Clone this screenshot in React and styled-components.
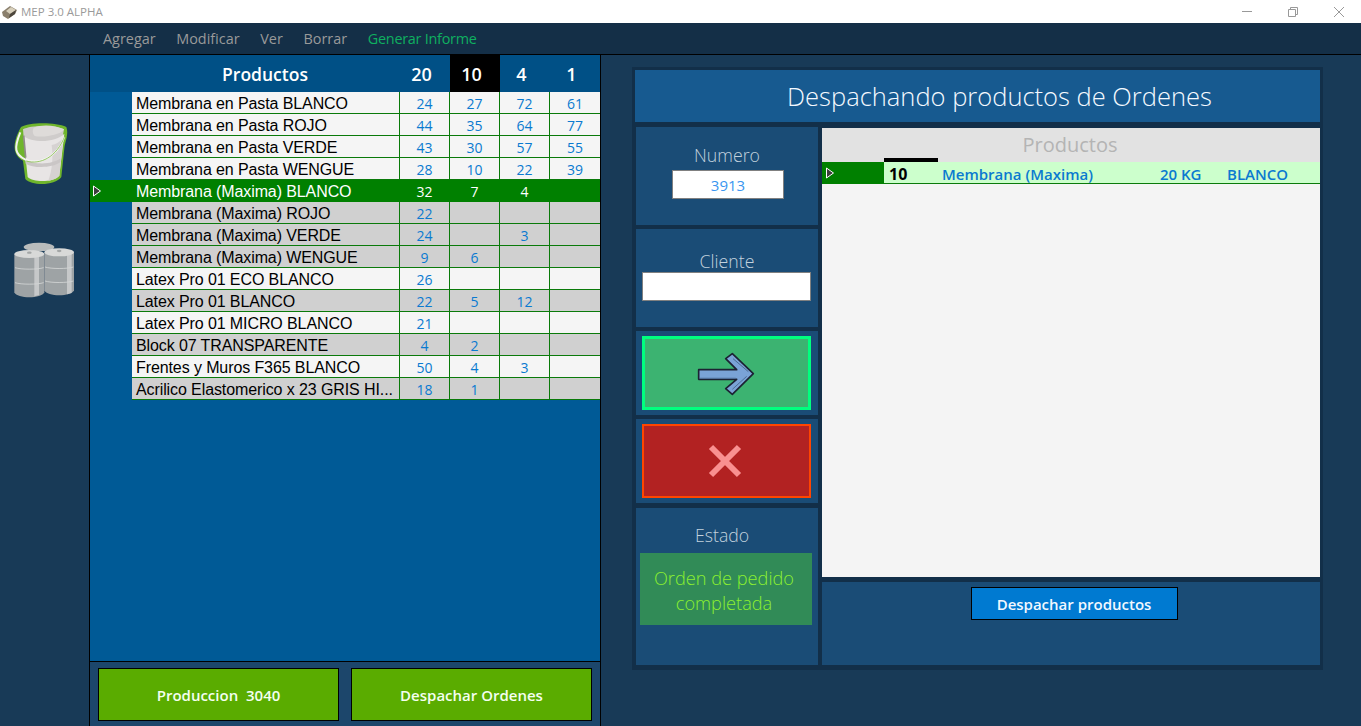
import React from "react";
import styled, { createGlobalStyle } from "styled-components";

const GlobalStyle = createGlobalStyle`
  html, body {
    margin: 0;
    height: 100%;
    overflow: hidden;
    background: #183a57;
    font-family: "Open Sans", "Noto Sans", sans-serif;
  }
  * {
    box-sizing: border-box;
  }
`;

const rows = [
  { name: "Membrana en Pasta BLANCO", v: ["24", "27", "72", "61"] },
  { name: "Membrana en Pasta ROJO", v: ["44", "35", "64", "77"] },
  { name: "Membrana en Pasta VERDE", v: ["43", "30", "57", "55"] },
  { name: "Membrana en Pasta WENGUE", v: ["28", "10", "22", "39"] },
  { name: "Membrana (Maxima) BLANCO", v: ["32", "7", "4", ""], selected: true },
  { name: "Membrana (Maxima) ROJO", v: ["22", "", "", ""], gray: true },
  { name: "Membrana (Maxima) VERDE", v: ["24", "", "3", ""], gray: true },
  { name: "Membrana (Maxima) WENGUE", v: ["9", "6", "", ""], gray: true },
  { name: "Latex Pro 01 ECO BLANCO", v: ["26", "", "", ""] },
  { name: "Latex Pro 01 BLANCO", v: ["22", "5", "12", ""], gray: true },
  { name: "Latex Pro 01 MICRO BLANCO", v: ["21", "", "", ""] },
  { name: "Block 07 TRANSPARENTE", v: ["4", "2", "", ""], gray: true },
  { name: "Frentes y Muros F365 BLANCO", v: ["50", "4", "3", ""] },
  { name: "Acrilico Elastomerico x 23 GRIS HI...", v: ["18", "1", "", ""], gray: true },
];

function RowMark() {
  return (
    <svg width="10" height="12" viewBox="0 0 10 12">
      <path d="M1.5 1 L8.5 6 L1.5 11 Z" fill="#3c3c3c" stroke="#fff" strokeWidth="1" />
    </svg>
  );
}

function AppIcon() {
  return (
    <svg width="17" height="16" viewBox="0 0 17 16">
      <path d="M1 8 L9 2 L16 6 L14 10 L7 15 L2 12 Z" fill="#8a7f6c" />
      <path d="M5 7 L10 3 L15 6 L9 10 Z" fill="#d8d0bc" />
      <path d="M9 10 L15 6 L14 10 L8 14 Z" fill="#4c463c" />
    </svg>
  );
}

function BucketIcon() {
  return (
    <svg width="75" height="75" viewBox="0 0 225 225">
      <path
        d="M48 36 C70 22 150 20 184 36 C192 58 180 80 178 100 L169 186 C150 213 80 213 61 192 L54 137 C26 122 18 90 48 36 Z"
        fill="#6fb52c"
      />
      <path d="M54 43 C76 30 150 29 177 43 L172 70 C140 88 80 85 56 66 Z" fill="#cfcccb" />
      <path d="M86 38 C110 28 150 30 177 43 C168 60 110 70 88 62 C82 55 82 45 86 38 Z" fill="#dedbd9" />
      <path d="M55 62 C80 84 150 84 178 56 L163 182 C145 203 85 203 68 186 Z" fill="#e8e5e5" />
      <path d="M140 90 C152 88 165 80 175 68 L163 182 C155 190 146 194 130 197 C142 165 145 125 140 90 Z" fill="#d6d2d2" />
      <path d="M60 132 C85 150 140 150 167 130 L166 142 C140 160 85 160 62 146 Z" fill="#cac6c6" />
      <path d="M46 52 C26 100 30 118 60 133 C100 150 155 130 178 66" fill="none" stroke="#f2f2f0" strokeWidth="6" />
      <path d="M64 138 C105 150 155 128 180 62" fill="none" stroke="#86bf4a" strokeWidth="2.5" />
      <path d="M56 62 L62 128" stroke="#908b8a" strokeWidth="5" />
    </svg>
  );
}

function Drum({ x, y, w, h, stripe, hoopA, hoopB }) {
  return (
    <g transform={`translate(${x} ${y})`}>
      <path d={`M0 12 V${h - 16} C8 ${h + 4} ${w - 8} ${h + 4} ${w} ${h - 16} V12 Z`} fill="#9ea3a5" />
      <path d={`M${stripe} 14 H${stripe + 14} V${h - 8} L${stripe} ${h - 4} Z`} fill="#c6c8c9" />
      <ellipse cx={w / 2} cy="12" rx={w / 2} ry="12" fill="#d8d9d8" />
      <ellipse cx={w / 2} cy="8" rx="7" ry="3.5" fill="#a3a6a6" />
      <path
        d={`M2 ${hoopA} C20 ${hoopA + 6} ${w - 20} ${hoopA + 6} ${w - 2} ${hoopA} M2 ${hoopB} C20 ${hoopB + 6} ${w - 20} ${hoopB + 6} ${w - 2} ${hoopB}`}
        fill="none"
        stroke="#d4d6d6"
        strokeWidth="2.5"
      />
    </g>
  );
}

function DrumsIcon() {
  return (
    <svg width="75" height="75" viewBox="0 0 225 225">
      <ellipse cx="102" cy="36" rx="46" ry="13" fill="#b9bcbc" />
      <Drum x={118} y={40} w={89} h={142} stripe={68} hoopA={56} hoopB={98} />
      <Drum x={28} y={45} w={90} h={143} stripe={60} hoopA={53} hoopB={98} />
    </svg>
  );
}

function ArrowIcon() {
  return (
    <svg width="60" height="45" viewBox="210 90 180 135">
      <path
        d="M221 146 H335 L302 113 L322 98 L385 158 L322 220 L302 203 L335 175 H221 Z"
        fill="#7aa3d6"
        stroke="#1c2233"
        strokeWidth="5"
        strokeLinejoin="round"
      />
      <path d="M324 113 L370 152 M322 205 L365 166" stroke="#35506f" strokeWidth="2" />
      <path d="M224 172 H332" stroke="#4f6f99" strokeWidth="4" />
    </svg>
  );
}

function CloseIcon() {
  return (
    <svg width="34" height="34" viewBox="0 0 34 34">
      <path d="M3 3 L31 31 M31 3 L3 31" stroke="#f99090" strokeWidth="6" />
    </svg>
  );
}

export default function App() {
  return (
    <Page>
      <GlobalStyle />
      <TitleBar>
        <AppIcon />
        <TitleText>MEP 3.0 ALPHA</TitleText>
        <WindowControls>
          <svg width="12" height="12" viewBox="0 0 12 12">
            <path d="M1 5.5 H11" stroke="#999" />
          </svg>
          <svg width="12" height="12" viewBox="0 0 12 12">
            <path d="M1.5 3.5 H8.5 V10.5 H1.5 Z M3.5 3.5 V1.5 H10.5 V8.5 H8.5" fill="none" stroke="#999" />
          </svg>
          <svg width="12" height="12" viewBox="0 0 12 12">
            <path d="M1 1 L11 11 M11 1 L1 11" stroke="#999" />
          </svg>
        </WindowControls>
      </TitleBar>
      <MenuBar>
        <MenuItem>Agregar</MenuItem>
        <MenuItem>Modificar</MenuItem>
        <MenuItem>Ver</MenuItem>
        <MenuItem>Borrar</MenuItem>
        <MenuItem $green>Generar Informe</MenuItem>
      </MenuBar>
      <Body>
        <Rail>
          <BucketIcon />
          <DrumsIcon />
        </Rail>
        <Center>
          <TableArea>
            <HeaderRow>
              <span />
              <HeaderName>Productos</HeaderName>
              <HeaderNum>20</HeaderNum>
              <HeaderNum $active>10</HeaderNum>
              <HeaderNum>4</HeaderNum>
              <HeaderNum>1</HeaderNum>
            </HeaderRow>
            {rows.map((row) => (
              <Row key={row.name} $selected={row.selected} $gray={row.gray}>
                <MarkCell>{row.selected && <RowMark />}</MarkCell>
                <NameCell>{row.name}</NameCell>
                {row.v.map((value, i) => (
                  <NumCell key={i}>{value}</NumCell>
                ))}
              </Row>
            ))}
          </TableArea>
          <CenterFooter>
            <GreenButton>Produccion&nbsp; 3040</GreenButton>
            <GreenButton>Despachar Ordenes</GreenButton>
          </CenterFooter>
        </Center>
        <Dispatch>
          <DispatchTitle>Despachando productos de Ordenes</DispatchTitle>
          <DispatchBody>
            <SideColumn>
              <InfoBox>
                <InfoLabel>Numero</InfoLabel>
                <NumberField>3913</NumberField>
              </InfoBox>
              <ClientBox>
                <InfoLabel>Cliente</InfoLabel>
                <ClientField />
              </ClientBox>
              <ActionBox>
                <ActionButton $bg="#3cb371" $border="#00ff7f" $width={3}>
                  <ArrowIcon />
                </ActionButton>
              </ActionBox>
              <ActionBox>
                <ActionButton $bg="#b22222" $border="#ff4500" $width={2}>
                  <CloseIcon />
                </ActionButton>
              </ActionBox>
              <StateBox>
                <StateLabel>Estado</StateLabel>
                <StateMessage>Orden de pedido completada</StateMessage>
              </StateBox>
            </SideColumn>
            <MainColumn>
              <Grid>
                <GridHeader>Productos</GridHeader>
                <GridRow>
                  <GridMark>
                    <RowMark />
                  </GridMark>
                  <GridQty>10</GridQty>
                  <GridText>Membrana (Maxima)</GridText>
                  <GridText>20 KG</GridText>
                  <GridText>BLANCO</GridText>
                </GridRow>
              </Grid>
              <GridFooter>
                <BlueButton>Despachar productos</BlueButton>
              </GridFooter>
            </MainColumn>
          </DispatchBody>
        </Dispatch>
      </Body>
    </Page>
  );
}

const Page = styled.div`
  width: 1361px;
  height: 726px;
  display: flex;
  flex-direction: column;
  overflow: hidden;
`;

const TitleBar = styled.div`
  height: 23px;
  background: #fff;
  display: flex;
  align-items: center;
  padding-left: 1px;
`;

const TitleText = styled.span`
  font-size: 11.5px;
  color: #9a9a9a;
  margin-left: 3px;
`;

const WindowControls = styled.div`
  margin-left: auto;
  display: flex;
  gap: 34px;
  padding-right: 16px;
`;

const MenuBar = styled.div`
  height: 32px;
  background: #142f47;
  border-bottom: 1px solid #000;
  display: flex;
  align-items: center;
  gap: 20.7px;
  padding: 0 0 1px 103px;
`;

const MenuItem = styled.span`
  font-size: 14.4px;
  color: ${(p) => (p.$green ? "#0fb060" : "#9a9a9a")};
  letter-spacing: ${(p) => (p.$green ? "-0.25px" : "0")};
`;

const Body = styled.div`
  flex: 1;
  display: flex;
  min-height: 0;
`;

const Rail = styled.div`
  width: 90px;
  border-right: 1px solid #000;
  display: flex;
  flex-direction: column;
  align-items: flex-start;
  padding: 60px 0 0 5px;
  gap: 45px;
`;

const Center = styled.div`
  width: 511px;
  border-right: 1px solid #000;
  display: flex;
  flex-direction: column;
`;

const TableArea = styled.div`
  flex: 1;
  background: #005a96;
`;

const tableColumns = "42px 267px 50px 50px 50px 51px";

const HeaderRow = styled.div`
  height: 37px;
  background: #005086;
  display: grid;
  grid-template-columns: 42px 268px 50px 50px 50px 50px;
  color: #fff;
`;

const HeaderName = styled.div`
  font-size: 17.5px;
  font-weight: 600;
  display: flex;
  align-items: center;
  justify-content: center;
  padding-right: 2px;
`;

const HeaderNum = styled.div`
  font-size: 18px;
  font-weight: 600;
  display: flex;
  align-items: center;
  justify-content: center;
  padding-right: 7px;
  background: ${(p) => (p.$active ? "#000" : "transparent")};
`;

const NameCell = styled.div`
  height: 22px;
  font-family: "Liberation Sans", Arial, sans-serif;
  font-size: 16px;
  letter-spacing: -0.1px;
  color: #000;
  padding: 2px 0 0 4px;
  line-height: 19px;
  white-space: nowrap;
  overflow: hidden;
  border-bottom: 1px solid #0a7a0a;
`;

const NumCell = styled.div`
  height: 22px;
  font-size: 14px;
  font-weight: 500;
  color: #0a7ad0;
  text-align: center;
  padding-top: 2px;
  line-height: 19px;
  border-left: 1px solid #0a7a0a;
  border-bottom: 1px solid #0a7a0a;
`;

const MarkCell = styled.div`
  display: flex;
  padding: 5px 0 0 2px;
`;

const Row = styled.div`
  height: 22px;
  display: grid;
  grid-template-columns: ${tableColumns};
  background: ${(p) => (p.$selected ? "#008000" : "transparent")};

  ${NameCell}, ${NumCell} {
    background: ${(p) => (p.$selected ? "#008000" : p.$gray ? "#d0d0d0" : "#f5f5f5")};
    ${(p) => p.$selected && "color: #fff; border-color: #008000;"}
  }
`;

const CenterFooter = styled.div`
  height: 65px;
  border-top: 1px solid #000;
  background: #1c466b;
  display: flex;
  gap: 12px;
  padding: 6px 8px 5px 8px;
`;

const GreenButton = styled.div`
  flex: 1;
  background: #5aac00;
  border: 1px solid #000;
  color: #f4fff0;
  font-size: 15px;
  font-weight: 600;
  padding-top: 1px;
  display: flex;
  align-items: center;
  justify-content: center;
`;

const Dispatch = styled.div`
  width: 691px;
  height: 603px;
  margin: 12px 0 0 31px;
  background: #122f49;
  padding: 3px;
  display: flex;
  flex-direction: column;
`;

const DispatchTitle = styled.div`
  height: 52px;
  background: #175a90;
  color: #f4f9ff;
  font-size: 25.5px;
  font-weight: 300;
  padding-left: 44px;
  display: flex;
  align-items: center;
  justify-content: center;
  flex-shrink: 0;
`;

const DispatchBody = styled.div`
  display: flex;
  flex: 1;
  gap: 4px;
  padding: 5px 0 2px 1px;
  min-height: 0;
`;

const SideColumn = styled.div`
  width: 182px;
  display: flex;
  flex-direction: column;
  gap: 4px;
`;

const InfoBox = styled.div`
  height: 98px;
  background: #1a4c76;
  display: flex;
  flex-direction: column;
  align-items: center;
  padding-top: 17px;
`;

const ClientBox = styled(InfoBox)`
  padding-top: 21px;
`;

const InfoLabel = styled.div`
  font-size: 17.7px;
  line-height: 22px;
  font-weight: 300;
  color: #c2d2de;
`;

const NumberField = styled.div`
  width: 112px;
  height: 29px;
  margin: 4px 0 0 2px;
  background: #fff;
  border: 1px solid #808080;
  color: #3a96f0;
  font-size: 15px;
  display: flex;
  align-items: center;
  justify-content: center;
`;

const ClientField = styled.div`
  width: 169px;
  height: 29px;
  margin: 0 1px 0 0;
  background: #fff;
  border: 1px solid #808080;
`;

const ActionBox = styled.div`
  height: 84px;
  background: #1a4c76;
  padding: 5px 6px;
`;

const ActionButton = styled.div`
  width: 169px;
  height: 74px;
  background: ${(p) => p.$bg};
  border: ${(p) => p.$width}px solid ${(p) => p.$border};
  padding-right: 3px;
  display: flex;
  align-items: center;
  justify-content: center;
`;

const StateBox = styled(InfoBox)`
  height: 157px;
  padding-top: 16px;
  margin-top: 1px;
  align-items: flex-start;
  padding-left: 4px;
`;

const StateLabel = styled(InfoLabel)`
  margin: 0 0 7px 55px;
`;

const StateMessage = styled.div`
  width: 172px;
  height: 72px;
  background: #318b57;
  color: #8cf030;
  font-size: 18.2px;
  font-weight: 300;
  line-height: 25px;
  text-align: center;
  padding: 3px 8px 0 4px;
  display: flex;
  align-items: center;
  justify-content: center;
`;

const MainColumn = styled.div`
  flex: 1;
  display: flex;
  flex-direction: column;
  gap: 5px;
  padding-top: 1px;
`;

const Grid = styled.div`
  height: 449px;
  background: #f4f4f4;
`;

const GridHeader = styled.div`
  height: 34px;
  background: #e2e2e2;
  color: #b4b4b4;
  font-size: 20px;
  padding: 0 2px 2px 0;
  display: flex;
  align-items: center;
  justify-content: center;
  position: relative;

  &::after {
    content: "";
    position: absolute;
    left: 62px;
    bottom: 0;
    width: 54px;
    height: 4px;
    background: #000;
  }
`;

const GridRow = styled.div`
  height: 22px;
  display: grid;
  grid-template-columns: 62px 58px 218px 67px 1fr;
  align-items: center;
  background: #ccffcc;
  border-bottom: 1px solid #0a7a0a;
  color: #0a7ad0;
  font-size: 15px;
  font-weight: 600;
`;

const GridMark = styled.div`
  height: 22px;
  display: flex;
  background: #008000;
  padding: 5px 0 0 3px;
`;

const GridText = styled.div`
  line-height: 18px;
  padding-top: 2px;
`;

const GridQty = styled(GridText)`
  color: #000;
  font-size: 16px;
  font-weight: 700;
  padding-left: 5px;
`;

const GridFooter = styled.div`
  flex: 1;
  background: #1a4c76;
  display: flex;
  justify-content: center;
  align-items: flex-start;
  padding: 5px 0 0 6px;
`;

const BlueButton = styled.div`
  width: 207px;
  height: 33px;
  background: #007ad1;
  border: 1px solid #000;
  color: #f2f8ff;
  font-size: 15px;
  font-weight: 600;
  padding-top: 1px;
  display: flex;
  align-items: center;
  justify-content: center;
`;
